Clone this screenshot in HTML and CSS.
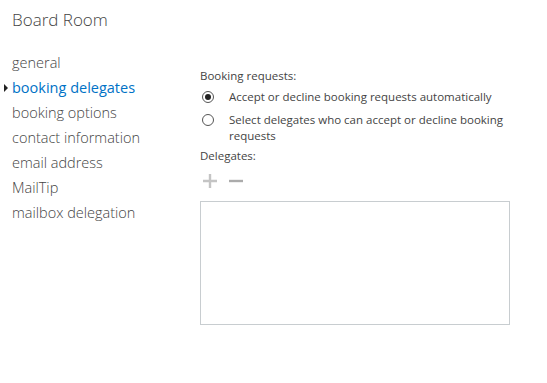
FILE: index.html
```html
<!DOCTYPE html>
<html lang="en">
<head>
    <meta charset="UTF-8">
    <title>Board Room</title>
    <link rel="stylesheet" href="styles.css">
</head>
<body>
    <h1 class="page-title">Board Room</h1>
    <div class="layout">
        <ul class="nav">
            <li>general</li>
            <li class="selected">booking delegates</li>
            <li>booking options</li>
            <li>contact information</li>
            <li>email address</li>
            <li>MailTip</li>
            <li>mailbox delegation</li>
        </ul>

        <div class="panel">
            <div class="label">Booking requests:</div>
            <div class="option">
                <span class="radio checked"></span>
                <span>Accept or decline booking requests automatically</span>
            </div>
            <div class="option">
                <span class="radio"></span>
                <span>Select delegates who can accept or decline booking requests</span>
            </div>
            <div class="label delegates-label">Delegates:</div>
            <div class="toolbar">
                <svg class="tool" width="16" height="16" viewBox="0 0 16 16">
                    <path d="M8 1v14M1 8h14" stroke="#c4c4c4" stroke-width="2.4" fill="none"/>
                </svg>
                <svg class="tool" width="16" height="16" viewBox="0 0 16 16">
                    <path d="M1 8h14" stroke="#ababab" stroke-width="2.4" fill="none"/>
                </svg>
            </div>
            <div class="delegate-list"></div>
        </div>
    </div>
</body>
</html>
```

FILE: styles.css
```css
body {
    margin: 0;
    font-family: 'Open Sans', 'Noto Sans', sans-serif;
    background-color: #ffffff;
    color: #444444;
}

.page-title {
    margin: 0;
    padding: 8px 0 0 12px;
    font-size: 17px;
    font-weight: 300;
    color: #444444;
    height: 42px;
}

.layout {
    display: flex;
}

.nav {
    list-style: none;
    margin: 0;
    padding: 0 0 0 12px;
    width: 188px;
}

.nav li {
    font-size: 14.5px;
    font-weight: 300;
    line-height: 25px;
    color: #444444;
    position: relative;
}

.nav li.selected {
    color: #0072c6;
    font-weight: 400;
}

.nav li.selected::before {
    content: '';
    position: absolute;
    left: -8px;
    top: 9px;
    border-top: 4px solid transparent;
    border-bottom: 4px solid transparent;
    border-left: 4px solid #222222;
}

.panel {
    padding-top: 18px;
    width: 310px;
    font-size: 11.5px;
    color: #444444;
}

.label {
    line-height: 16px;
    margin-bottom: 5px;
}

.option {
    display: flex;
    align-items: flex-start;
    line-height: 16px;
}

.option + .option {
    margin-top: 7px;
}

.radio {
    flex: none;
    width: 12px;
    height: 12px;
    border: 1px solid #555555;
    border-radius: 50%;
    margin: 2px 15px 0 2px;
    position: relative;
    box-sizing: border-box;
}

.radio.checked::after {
    content: '';
    position: absolute;
    left: 2px;
    top: 2px;
    width: 6px;
    height: 6px;
    border-radius: 50%;
    background-color: #222222;
}

.delegates-label {
    margin-top: 4px;
}

.toolbar {
    display: flex;
    gap: 10px;
    padding: 4px 0 0 2px;
    height: 28px;
}

.delegate-list {
    width: 310px;
    height: 124px;
    box-sizing: border-box;
    border: 1px solid #c8cdd0;
}
```
